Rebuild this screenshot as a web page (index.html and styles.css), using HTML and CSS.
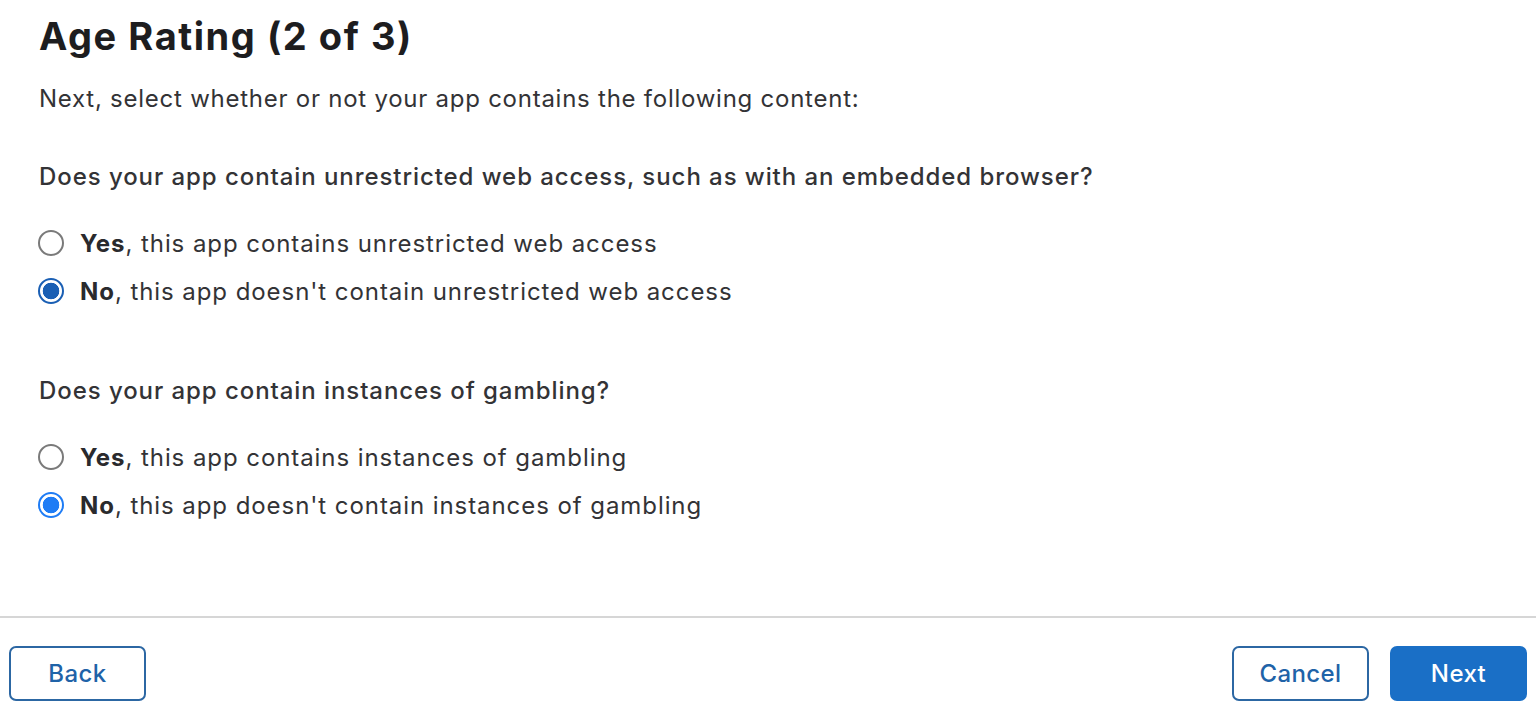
FILE: index.html
```html
<!DOCTYPE html>
<html lang="en">
<head>
<meta charset="utf-8">
<title>Age Rating (2 of 3)</title>
<link rel="stylesheet" href="styles.css">
</head>
<body>
<div class="page">
  <main class="content">
    <h1 class="title">Age Rating (2 of 3)</h1>
    <p class="intro">Next, select whether or not your app contains the following content:</p>

    <section class="question">
      <h2 class="q-text">Does your app contain unrestricted web access, such as with an embedded browser?</h2>
      <div class="options">
        <label class="option"><span class="radio"></span><span class="label"><b>Yes</b>, this app contains unrestricted web access</span></label>
        <label class="option"><span class="radio checked"></span><span class="label"><b>No</b>, this app doesn't contain unrestricted web access</span></label>
      </div>
    </section>

    <section class="question q2">
      <h2 class="q-text">Does your app contain instances of gambling?</h2>
      <div class="options">
        <label class="option"><span class="radio"></span><span class="label"><b>Yes</b>, this app contains instances of gambling</span></label>
        <label class="option"><span class="radio checked focus"></span><span class="label"><b>No</b>, this app doesn't contain instances of gambling</span></label>
      </div>
    </section>
  </main>
  <footer class="footer">
    <button class="btn btn-outline">Back</button>
    <div class="right">
      <button class="btn btn-outline">Cancel</button>
      <button class="btn btn-primary">Next</button>
    </div>
  </footer>
</div>
</body>
</html>
```

FILE: styles.css
```css
* { box-sizing: border-box; }
html, body { margin: 0; padding: 0; background: #fff; }
body {
  font-family: Inter, "Noto Sans", "Liberation Sans", sans-serif;
  color: #333336;
  width: 1536px;
  height: 726px;
  overflow: hidden;
}
.page { display: flex; flex-direction: column; height: 726px; }
.content { padding: 0 39px; height: 616px; }
.title {
  margin: 14px 0 0;
  font-size: 38px;
  line-height: 44px;
  font-weight: 700;
  color: #1d1d1f;
  letter-spacing: 1.55px;
}
.intro {
  margin: 25px 0 0;
  font-size: 24px;
  line-height: 32px;
  letter-spacing: 0.75px;
}
.question { margin-top: 46px; }
.q2 { margin-top: 68px; }
.q-text {
  margin: 0;
  font-size: 24px;
  line-height: 32px;
  font-weight: 500;
  letter-spacing: 0.93px;
}
.options { margin-top: 34px; display: flex; flex-direction: column; gap: 16px; }
.option { display: flex; align-items: center; gap: 16px; height: 32px; font-size: 24px; letter-spacing: 0.93px; }
.option b { font-weight: 700; color: #2a2a2d; }
.radio {
  width: 26px; height: 26px; border-radius: 50%;
  border: 2px solid #7a7a7a;
  flex: none;
  margin-left: -1px;
}
.radio.checked {
  border: 2.5px solid #1a5fb4;
  background: radial-gradient(circle, #1a5fb4 0 8px, #fff 8.6px);
}
.radio.focus {
  border-color: #1e7cf5;
  background: radial-gradient(circle, #1e7cf5 0 8px, #fff 8.6px);
}
.footer {
  border-top: 2px solid #d6d6d6;
  display: flex;
  justify-content: space-between;
  align-items: flex-start;
  padding: 28px 9px 0 9px;
  flex: 1;
}
.right { display: flex; gap: 21px; }
.btn {
  width: 137px; height: 55px;
  border-radius: 7px;
  font-family: Inter, "Noto Sans", "Liberation Sans", sans-serif;
  font-size: 24px;
  font-weight: 500;
  letter-spacing: 0.4px;
  cursor: pointer;
}
.btn-outline { background: #fff; border: 2px solid #2c67a3; color: #1f63a8; }
.btn-primary { background: #1a6fc6; border: 2px solid #1a6fc6; color: #fff; }
```
